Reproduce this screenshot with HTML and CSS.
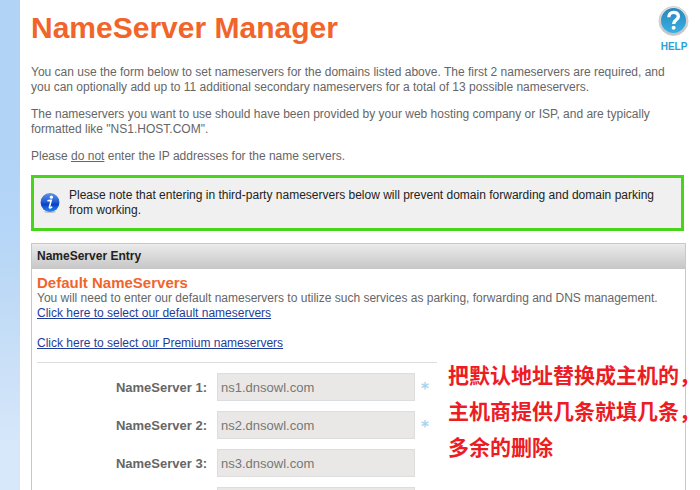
FILE: index.html
```html
<!DOCTYPE html>
<html lang="en">
<head>
  <meta charset="UTF-8">
  <meta name="viewport" content="width=device-width, initial-scale=1.0">
  <title>NameServer Manager</title>
  <link rel="stylesheet" href="styles.css">
</head>
<body>
  <main class="page">
    <header class="page-header">
      <h1>NameServer Manager</h1>
      <a class="help" href="#help">
        <svg width="32" height="32" viewBox="0 0 32 32" aria-hidden="true">
          <defs>
            <linearGradient id="ring" x1="0" y1="0" x2="0" y2="1">
              <stop offset="0" stop-color="#e4e4e6"/>
              <stop offset="1" stop-color="#c0c0c4"/>
            </linearGradient>
            <linearGradient id="disc" x1="0" y1="0" x2="0" y2="1">
              <stop offset="0" stop-color="#2b86ba"/>
              <stop offset="1" stop-color="#36b0e4"/>
            </linearGradient>
          </defs>
          <circle cx="15.5" cy="15" r="14.5" fill="url(#ring)" stroke="#cfcfd2"/>
          <circle cx="15.5" cy="14.5" r="12.5" fill="url(#disc)"/>
          <path d="M10.8 11.2C10.8 4.8 20.6 5 20.4 10.6C20.2 14 15.6 14.2 15.6 18" fill="none" stroke="#fff" stroke-width="3.4"/>
          <circle cx="15.6" cy="21.8" r="2" fill="#fff"/>
        </svg>
        <span>HELP</span>
      </a>
    </header>

    <section class="intro">
      <p>You can use the form below to set nameservers for the domains listed above. The first 2 nameservers are required, and you can optionally add up to 11 additional secondary nameservers for a total of 13 possible nameservers.</p>
      <p>The nameservers you want to use should have been provided by your web hosting company or ISP, and are typically formatted like "NS1.HOST.COM".</p>
      <p>Please <u>do not</u> enter the IP addresses for the name servers.</p>
    </section>

    <div class="notice">
      <svg width="20" height="20" viewBox="0 0 20 20" aria-hidden="true">
        <defs>
          <linearGradient id="info" x1="0" y1="0" x2="0" y2="1">
            <stop offset="0" stop-color="#5a92e6"/>
            <stop offset="0.45" stop-color="#2360d6"/>
            <stop offset="0.6" stop-color="#0b40c4"/>
            <stop offset="1" stop-color="#2c8af2"/>
          </linearGradient>
        </defs>
        <ellipse cx="10" cy="18.8" rx="6" ry="1.2" fill="#c4c4c4"/>
        <circle cx="10" cy="9.5" r="9.4" fill="url(#info)"/>
        <circle cx="11.4" cy="4.2" r="1.6" fill="#fff"/>
        <path d="M7.4 7.8C9 7.6 10 7.4 11.2 7.4L9.4 14.4C9.4 15.4 11 15 12.2 13.8" fill="none" stroke="#fff" stroke-width="1.6"/>
      </svg>
      <p>Please note that entering in third-party nameservers below will prevent domain forwarding and domain parking from working.</p>
    </div>

    <section class="panel">
      <h2>NameServer Entry</h2>
      <div class="panel-body">
        <h3>Default NameServers</h3>
        <p>You will need to enter our default nameservers to utilize such services as parking, forwarding and DNS management.</p>
        <a class="select-link" href="#default">Click here to select our default nameservers</a>
        <a class="select-link" href="#premium">Click here to select our Premium nameservers</a>
        <form class="servers">
          <div class="row">
            <label for="ns1">NameServer 1:</label>
            <input id="ns1" type="text" value="ns1.dnsowl.com">
            <span class="required">*</span>
          </div>
          <div class="row">
            <label for="ns2">NameServer 2:</label>
            <input id="ns2" type="text" value="ns2.dnsowl.com">
            <span class="required">*</span>
          </div>
          <div class="row">
            <label for="ns3">NameServer 3:</label>
            <input id="ns3" type="text" value="ns3.dnsowl.com">
          </div>
          <div class="row">
            <label for="ns4"></label>
            <input id="ns4" type="text" aria-label="NameServer 4">
          </div>
        </form>
        <p class="tip" lang="zh-CN">把默认地址替换成主机的，<br>主机商提供几条就填几条，<br>多余的删除</p>
      </div>
    </section>
  </main>
</body>
</html>
```
FILE: styles.css
```css
* {
  box-sizing: border-box;
}

body {
  margin: 0;
  height: 100vh;
  overflow: hidden;
  font-family: "Liberation Sans", Arial, sans-serif;
  font-size: 12px;
  line-height: 15px;
  color: #666;
  background: linear-gradient(#b1d3f5, #b1d3f5 32%, #b5d6f8 46%, #bbd8f5 56%, #c8dff7 72%, #d7e8fa 92%);
}

h1, h2, h3, p {
  margin: 0;
}

.page {
  min-height: 100vh;
  margin-left: 20px;
  padding: 6px 14px 0 11px;
  background: #fff;
}

.page-header {
  display: flex;
  justify-content: space-between;
  align-items: flex-start;
  margin-right: -4px;
  height: 59px;
}

h1 {
  padding-top: 4px;
  font-size: 30px;
  line-height: 36px;
  color: #f1652b;
}

.help {
  display: flex;
  flex-direction: column;
  align-items: center;
  font-size: 10px;
  line-height: 18px;
  font-weight: bold;
  color: #2d9fd8;
  text-decoration: none;
}

.intro {
  display: flex;
  flex-direction: column;
  gap: 12px;
}

.notice {
  display: flex;
  align-items: center;
  gap: 9px;
  min-height: 56px;
  margin: 11px 2px 12px 0;
  padding: 0 6px;
  border: 3px solid #48d41a;
  background: #f0f0f0;
  color: #222;
}

.notice svg {
  flex: none;
}

.panel {
  border: 1px solid #c8c8c8;
}

h2 {
  padding: 0 5px;
  font-size: 12px;
  line-height: 25px;
  color: #222;
  background: linear-gradient(#ebebeb, #c6c6c6);
}

.panel-body {
  position: relative;
  padding: 5px;
}

h3 {
  font-size: 15px;
  line-height: 17px;
  color: #f1652b;
}

.select-link {
  display: block;
  width: fit-content;
  margin-bottom: 15px;
  color: #1f3c9c;
}

.servers {
  display: flex;
  flex-direction: column;
  gap: 10px;
  width: 400px;
  margin-top: -4px;
  padding-top: 10px;
  border-top: 1px solid #ddd;
}

.row {
  display: flex;
  align-items: center;
}

.row label {
  width: 170px;
  margin-right: 10px;
  font-size: 13px;
  font-weight: bold;
  text-align: right;
}

.row input {
  width: 198px;
  height: 28px;
  padding: 0 3px;
  border: 1px solid #ddd;
  font: 13px "Liberation Sans", Arial, sans-serif;
  color: #777;
  background: #e9e8e6;
}

.required {
  margin-left: 6px;
  padding-top: 4px;
  font-family: "DejaVu Sans", sans-serif;
  font-size: 15px;
  font-weight: bold;
  color: #a6d3ee;
}

/* note laid over the form */
.tip {
  position: absolute;
  top: 87px;
  left: 416px;
  font-family: "Noto Sans CJK SC", sans-serif;
  font-size: 21px;
  line-height: 36px;
  font-weight: bold;
  white-space: nowrap;
  color: #ed1c24;
}
```
